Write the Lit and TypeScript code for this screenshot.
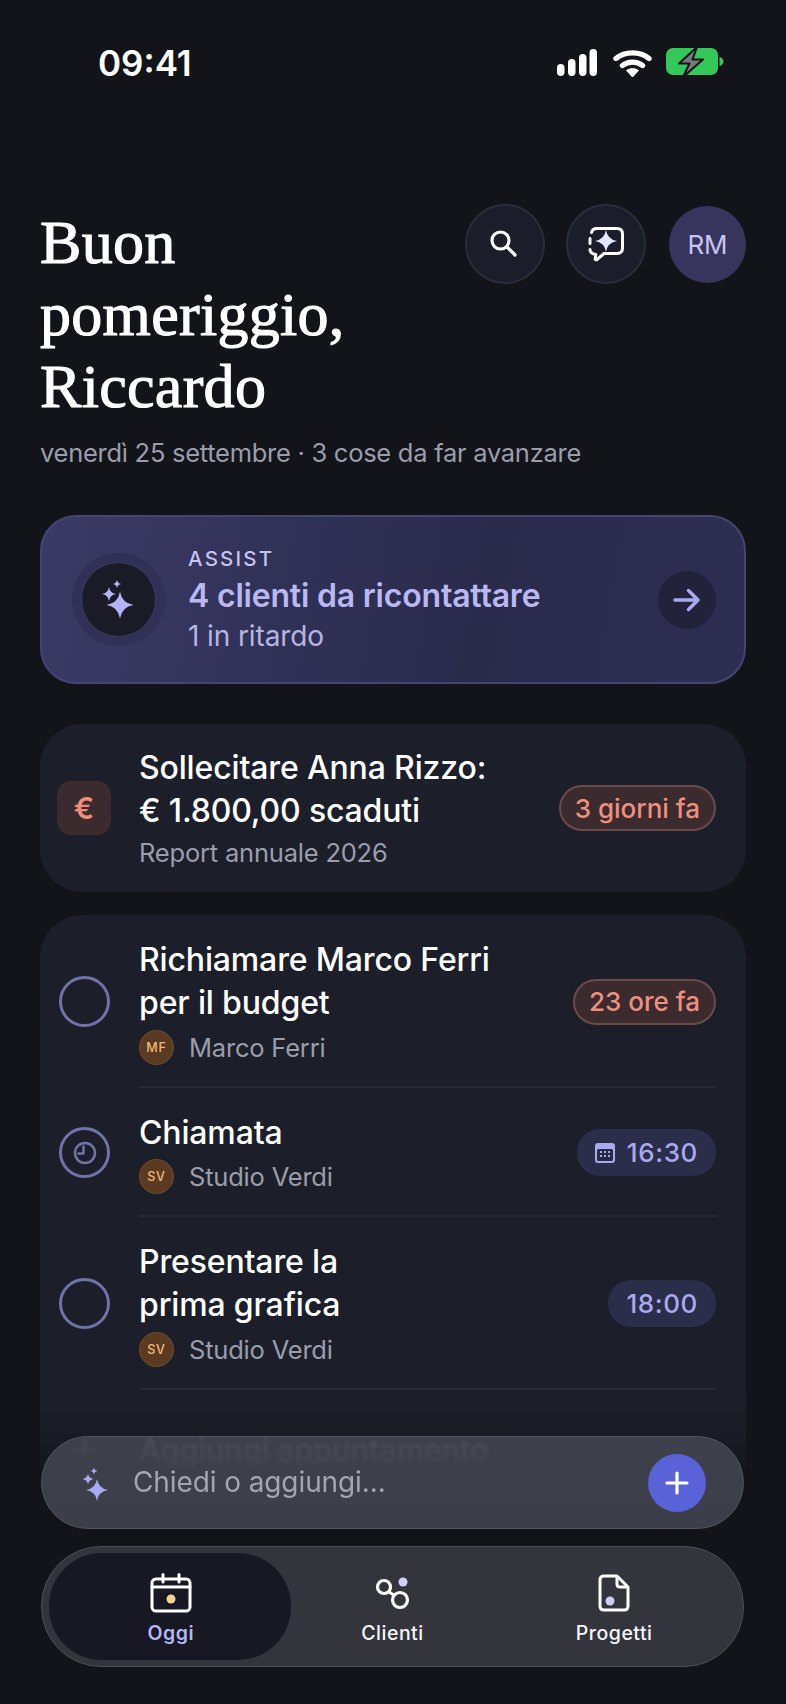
import { LitElement, html, css, svg } from "lit";
import { customElement } from "lit/decorators.js";

const star = (cx: number, cy: number, r: number) => {
  const k = r * 0.14;
  return `M${cx} ${cy - r}Q${cx + k} ${cy - k} ${cx + r} ${cy}Q${cx + k} ${cy + k} ${cx} ${cy + r}Q${cx - k} ${cy + k} ${cx - r} ${cy}Q${cx - k} ${cy - k} ${cx} ${cy - r}Z`;
};

const sparkles = (w: number, h: number, stars: number[][], fill: string) => html`<svg width=${w} height=${h} viewBox="0 0 ${w} ${h}">
  ${stars.map((s) => svg`<path d=${star(s[0], s[1], s[2])} fill=${fill} />`)}
</svg>`;

type Task = { lines: string[]; initials: string; client: string; kind: string; badge: string; clock?: boolean; cal?: boolean };

const tasks: Task[] = [
  { lines: ["Richiamare Marco Ferri", "per il budget"], initials: "MF", client: "Marco Ferri", kind: "late", badge: "23 ore fa" },
  { lines: ["Chiamata"], initials: "SV", client: "Studio Verdi", kind: "time", badge: "16:30", clock: true, cal: true },
  { lines: ["Presentare la", "prima grafica"], initials: "SV", client: "Studio Verdi", kind: "time", badge: "18:00" },
];

@customElement("app-root")
export class AppRoot extends LitElement {
  static styles = css`
    :host {
      display: block;
      width: 786px;
      height: 1704px;
      position: relative;
      overflow: hidden;
      background: #13141a;
      font-family: Inter, "Noto Sans", sans-serif;
      color: #fff;
    }
    * { box-sizing: border-box; }
    svg { display: block; flex: none; }
    .status {
      height: 127px;
      display: flex;
      justify-content: space-between;
      align-items: center;
      padding: 0 62px 1px 98px;
    }
    .time { font-size: 35px; font-weight: 600; line-height: 1; }
    .sys { display: flex; align-items: center; }
    .page { padding: 77px 40px 0; }
    .head { display: flex; justify-content: space-between; align-items: flex-start; }
    h1 {
      margin: 2px 0 0;
      font: 400 62px/72px "Liberation Serif", serif;
      -webkit-text-stroke: 1.1px #fff;
      letter-spacing: 0.3px;
      color: #fff;
      width: 340px;
    }
    .acts { display: flex; align-items: center; gap: 21px; }
    .rbtn {
      width: 80px; height: 80px; border-radius: 50%;
      background: #1b1e2a; border: 2px solid #2b2e3a;
      display: flex; align-items: center; justify-content: center;
    }
    .search-ico { transform: translate(-2px, -1px); }
    .me {
      width: 77px; height: 77px; border-radius: 50%;
      background: #37355e; color: #c6c5f0;
      display: flex; align-items: center; justify-content: center;
      font-size: 26px; font-weight: 400;
      margin-left: 2px;
    }
    .sub { margin: 14px 0 0; font-size: 25.5px; line-height: 34px; letter-spacing: -0.27px; color: #9a9dab; }
    .assist {
      margin-top: 45px; height: 169px;
      border-radius: 36px; border: 2px solid #454573;
      background: linear-gradient(100deg, #3b3a66 0%, #2f3055 40%, #2a2b4b 62%, #2d2e52 100%);
      display: flex; align-items: center;
      padding: 0 28px 0 30px;
    }
    .halo {
      width: 93px; height: 93px; border-radius: 50%;
      background: #313158;
      display: flex; align-items: center; justify-content: center; flex: none;
    }
    .core {
      width: 75px; height: 75px; border-radius: 50%;
      background: #1a1b27; border: 1px solid #3c3c62;
      display: flex; align-items: center; justify-content: center;
    }
    .a-text { flex: 1; margin-left: 23px; }
    .a-label { font-size: 20.5px; line-height: 26px; font-weight: 500; letter-spacing: 2.2px; color: #c5c4ee; }
    .a-title { font-size: 32px; line-height: 44px; font-weight: 560; letter-spacing: -0.2px; color: #b9b8f3; margin-top: 2px; }
    .a-sub { font-size: 28px; line-height: 34px; color: #b6b5e2; margin-top: 1px; letter-spacing: -0.1px; }
    .go {
      width: 58px; height: 58px; border-radius: 50%;
      background: #22233a;
      display: flex; align-items: center; justify-content: center; flex: none;
    }
    .card { background: #1c1f2a; border-radius: 42px; }
    .bill {
      margin-top: 40px; height: 168px;
      display: flex; align-items: center;
      padding: 0 30px 0 17px;
    }
    .euro {
      width: 54px; height: 54px; border-radius: 14px; flex: none;
      background: #3b2b2f; color: #ee8d7a;
      display: flex; align-items: center; justify-content: center;
      font-size: 30px; font-weight: 600;
      margin: 0 28px 0 0;
    }
    .body { flex: 1; min-width: 0; }
    .t { font-size: 32px; line-height: 43px; font-weight: 540; color: #fff; letter-spacing: -0.15px; }
    .s { font-size: 25.5px; line-height: 34px; color: #9a9dab; margin-top: 4px; letter-spacing: -0.2px; }
    .badge {
      flex: none; height: 46px; border-radius: 23px;
      display: flex; align-items: center;
      padding: 0 14px;
      font-size: 26px; font-weight: 500;
    }
    .late { background: #3b2a2e; border: 2px solid #6d4a4a; color: #ef8f7e; }
    .time-b { background: #2a2e4a; color: #a9a9ee; height: 47px; letter-spacing: .6px; gap: 12px; padding: 0 18px; font-weight: 530; }
    .list { margin-top: 23px; height: 800px; }
    .row { display: flex; align-items: center; }
    .check {
      width: 51px; height: 51px; border-radius: 50%; border: 3.5px solid #7073a8;
      margin: 0 29px 0 19px; flex: none;
      display: flex; align-items: center; justify-content: center;
    }
    .inner {
      flex: 1; display: flex; align-items: center;
      margin-right: 30px; border-bottom: 2px solid #272a36;
      min-width: 0; padding-top: 2px;
    }
    .meta { display: flex; align-items: center; gap: 15px; margin-top: 5px; height: 36px; }
    .av {
      width: 35px; height: 35px; border-radius: 50%;
      background: #5a3a20; border: 1.5px solid #6f4e2e; color: #f2b97f;
      display: flex; align-items: center; justify-content: center;
      font-size: 12.5px; font-weight: 500; letter-spacing: .8px; flex: none;
    }
    .m { font-size: 25.5px; color: #9a9dab; letter-spacing: -0.2px; }
    .r1 .inner { height: 173px; }
    .r2 .inner { height: 129px; }
    .r3 .inner { height: 173px; }
    .add { height: 80px; }
    .add .check { border: none; margin-top: 38px; opacity: .6; }
    .add-t { margin-top: 38px; font-size: 31px; letter-spacing: -0.3px; }
    .scrim {
      position: absolute; left: 0; right: 0; top: 1395px; bottom: 0;
      background: linear-gradient(180deg, rgba(19,20,26,0) 0, rgba(19,20,26,.35) 41px, rgba(19,20,26,.7) 70px, #13141a 74px);
    }
    .ask {
      position: absolute; left: 41px; top: 1436px; width: 703px; height: 93px;
      border-radius: 47px;
      background: linear-gradient(180deg, rgba(66,69,81,.9) 0%, rgba(62,64,74,.97) 100%);
      backdrop-filter: blur(1.5px);
      border: 1.5px solid #53555f;
      display: flex; align-items: center;
      padding: 0 37px 0 32px;
    }
    .ph { flex: 1; font-size: 28px; letter-spacing: -0.1px; color: #a3a5b1; margin-left: 23px; margin-top: -2px; }
    .plus {
      width: 58px; height: 58px; border-radius: 50%; background: #5a62d8;
      display: flex; align-items: center; justify-content: center;
    }
    .nav {
      position: absolute; left: 41px; top: 1546px; width: 703px; height: 121px;
      border-radius: 60px; background: #33343c;
      border: 1.5px solid #4d4e56;
      display: flex; padding: 0 18px;
    }
    .tab {
      position: relative; width: 222px; display: flex; flex-direction: column; align-items: center;
      font-size: 19.5px; font-weight: 450; letter-spacing: .5px; color: #f4f4f8;
    }
    .tab.on { color: #b6b7f4; font-weight: 600; }
    .tab.on::before {
      content: ""; position: absolute; left: -11px; right: -9px; top: 6px; bottom: 6px;
      border-radius: 53px; background: #171823;
    }
    .tab > * { position: relative; }
    .ico { height: 42px; margin-top: 25px; display: flex; align-items: center; justify-content: center; }
    .lbl { line-height: 24px; margin-top: 7px; }
  `;

  render() {
    return html`
      <div class="status">
        <div class="time">09:41</div>
        <div class="sys">
          <svg width="167" height="30" viewBox="0 0 167 30">
            <g fill="#fff">
              <rect x="0" y="16" width="7.500" height="12" rx="3.700"/>
              <rect x="11" y="11" width="7.500" height="17" rx="3.700"/>
              <rect x="22" y="6" width="7.500" height="22" rx="3.700"/>
              <rect x="32.500" y="1" width="7.500" height="27" rx="3.700"/>
            </g>
            <g fill="none" stroke="#fff" stroke-width="5.400" stroke-linecap="round">
              <path d="M59 10.500C68 3 83 3 92 10.500"/>
              <path d="M65.500 17.500C71 13 80 13 85.500 17.500"/>
            </g>
            <path d="M75.500 29L69.500 22.500C73 20 78 20 81.500 22.500Z" fill="#fff" stroke="#fff" stroke-linejoin="round" stroke-width="1"/>
            <rect x="109" y="0" width="52" height="27" rx="7" fill="#34c759"/>
            <path d="M162.500 9c2.500.5 4 2.400 4 4.500s-1.500 4-4 4.500z" fill="#34c759"/>
            <path d="M140 -1L122 15.500H132.500L126 29L146 11.500H135.500Z" fill="#77787e" stroke="#13141a" stroke-width="2" stroke-linejoin="round"/>
          </svg>
        </div>
      </div>
      <div class="page">
        <div class="head">
          <h1>Buon pomeriggio, Riccardo</h1>
          <div class="acts">
            <div class="rbtn">
              <svg class="search-ico" width="30" height="30" viewBox="0 0 30 30" fill="none" stroke="#fff" stroke-width="3.200" stroke-linecap="round">
                <circle cx="12.500" cy="12.500" r="8.500"/><path d="M19 19L27 27"/>
              </svg>
            </div>
            <div class="rbtn">
              <svg width="38" height="38" viewBox="0 0 38 38" fill="none">
                <path d="M4.500 7.500C5 5 7 3.500 10 3.500H30C33.500 3.500 35.500 5.500 35.500 9V23C35.500 26.500 33.500 28.500 30 28.500H17L10 34.500C9 35.200 8 34.700 8.200 33.500L8.800 29.500C5.500 29 3 27 3 24.500" stroke="#fff" stroke-width="3" stroke-linecap="round" stroke-linejoin="round"/>
                <path d="M3 13.500V18.500" stroke="#fff" stroke-width="3" stroke-linecap="round"/>
                <path d=${star(19, 16, 11)} fill="#e4e5ff"/>
              </svg>
            </div>
            <div class="me">RM</div>
          </div>
        </div>
        <p class="sub">venerdì 25 settembre · 3 cose da far avanzare</p>

        <div class="assist">
          <div class="halo"><div class="core">
            ${sparkles(40, 40, [[21, 25, 13.5], [10, 14, 7], [18, 4, 4.2]], "#b3b3f6")}
          </div></div>
          <div class="a-text">
            <div class="a-label">ASSIST</div>
            <div class="a-title">4 clienti da ricontattare</div>
            <div class="a-sub">1 in ritardo</div>
          </div>
          <div class="go">
            <svg width="28" height="24" viewBox="0 0 28 24" fill="none" stroke="#a9a8f2" stroke-width="3.500" stroke-linecap="round" stroke-linejoin="round">
              <path d="M2 12H25M15.500 2.500L25 12L15.500 21.500"/>
            </svg>
          </div>
        </div>

        <div class="card bill">
          <div class="euro">€</div>
          <div class="body">
            <div class="t">Sollecitare Anna Rizzo:<br />€ 1.800,00 scaduti</div>
            <div class="s">Report annuale 2026</div>
          </div>
          <div class="badge late">3 giorni fa</div>
        </div>

        <div class="card list">
          ${tasks.map((t, i) => html`
            <div class="row r${i + 1}">
              <div class="check">
                ${t.clock ? html`<svg width="28" height="28" viewBox="0 0 28 28" fill="none" stroke="#7073a8" stroke-width="2.500" stroke-linecap="round" stroke-linejoin="round"><circle cx="14" cy="14" r="10"/><path d="M12.500 7.500V14.500H7.500"/></svg>` : ""}
              </div>
              <div class="inner">
                <div class="body">
                  <div class="t">${t.lines.map((l, j) => html`${j ? html`<br />` : ""}${l}`)}</div>
                  <div class="meta"><div class="av">${t.initials}</div><div class="m">${t.client}</div></div>
                </div>
                <div class="badge ${t.kind === "late" ? "late" : "time-b"}">
                  ${t.cal ? html`<svg width="20" height="20" viewBox="0 0 20 20"><rect width="20" height="20" rx="3" fill="#a9a9ee"/><rect x="2" y="6" width="16" height="12" rx="1.500" fill="#262a45"/><g fill="#a9a9ee"><rect x="5" y="8" width="2" height="2"/><rect x="9" y="8" width="2" height="2"/><rect x="13" y="8" width="2" height="2"/><rect x="5" y="12" width="2" height="2"/><rect x="9" y="12" width="2" height="2"/><rect x="13" y="12" width="2" height="2"/></g></svg>` : ""}
                  ${t.badge}
                </div>
              </div>
            </div>
          `)}
          <div class="row add">
            <div class="check"><svg width="28" height="28" viewBox="0 0 28 28" fill="none" stroke="#fff" stroke-width="3" stroke-linecap="round"><path d="M14 4V24M4 14H24"/></svg></div>
            <div class="t add-t">Aggiungi appuntamento</div>
          </div>
        </div>
      </div>

      <div class="scrim"></div>

      <div class="ask">
        ${sparkles(36, 46, [[23, 30, 11], [14, 19, 5.5], [20, 11, 3.5]], "#a9a9f4")}
        <div class="ph">Chiedi o aggiungi...</div>
        <div class="plus">
          <svg width="24" height="24" viewBox="0 0 24 24" stroke="#fff" stroke-width="3.200" stroke-linecap="round"><path d="M12 2V22M2 12H22"/></svg>
        </div>
      </div>

      <div class="nav">
        <div class="tab on">
          <div class="ico">
            <svg width="42" height="40" viewBox="0 0 42 40" fill="none" stroke="#fff" stroke-width="3" stroke-linecap="round" stroke-linejoin="round">
              <rect x="2" y="6" width="38" height="32" rx="4"/><path d="M2 14H40M13 1.500V9M29 1.500V9"/>
              <circle cx="21" cy="26" r="4.500" fill="#f4d58d" stroke="none"/>
            </svg>
          </div>
          <div class="lbl">Oggi</div>
        </div>
        <div class="tab">
          <div class="ico">
            <svg width="36" height="36" viewBox="0 0 36 36" fill="none" stroke="#fff" stroke-width="3.200">
              <circle cx="9" cy="12" r="6.500"/><circle cx="25" cy="25" r="7.500"/><path d="M14 17L19.500 20.500"/>
              <circle cx="28" cy="7" r="4.500" fill="#d0cffa" stroke="none"/>
            </svg>
          </div>
          <div class="lbl">Clienti</div>
        </div>
        <div class="tab">
          <div class="ico">
            <svg width="32" height="38" viewBox="0 0 32 38" fill="none" stroke="#fff" stroke-width="3" stroke-linejoin="round">
              <path d="M6 2H19L30 13V32C30 34.500 28.500 36 26 36H6C3.500 36 2 34.500 2 32V6C2 3.500 3.500 2 6 2Z"/>
              <path d="M19 2V10C19 12 20 13 22 13H30"/>
              <circle cx="12" cy="27" r="4.500" fill="#cfcdf5" stroke="none"/>
            </svg>
          </div>
          <div class="lbl">Progetti</div>
        </div>
      </div>
    `;
  }
}
